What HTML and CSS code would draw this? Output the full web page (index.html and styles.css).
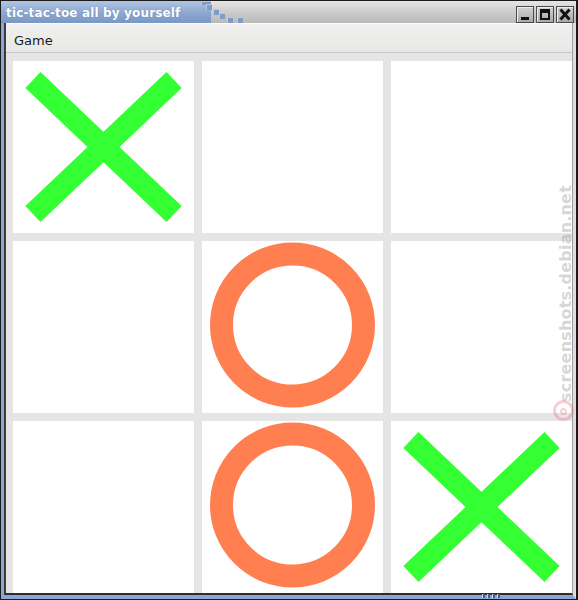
FILE: index.html
```html
<!DOCTYPE html>
<html>
<head>
<meta charset="utf-8">
<title>tic-tac-toe all by yourself</title>
<link rel="stylesheet" href="styles.css">
</head>
<body>
<div class="window">
  <div class="titlebar">
    <span class="title">tic-tac-toe all by yourself</span>
    <div class="steps">
      <span class="sq s1"></span><span class="sq s2"></span><span class="sq s3"></span><span class="sq s4"></span><span class="sq s5"></span><span class="sq s6"></span>
    </div>
    <div class="buttons">
      <span class="btn btn-min"><svg width="18" height="17" viewBox="0 0 18 17"><rect x="5" y="11" width="8" height="3" fill="#111"/></svg></span>
      <span class="btn btn-max"><svg width="18" height="17" viewBox="0 0 18 17"><rect x="5" y="4" width="8" height="9" fill="none" stroke="#111" stroke-width="2"/><rect x="5" y="4" width="8" height="3" fill="#111"/></svg></span>
      <span class="btn btn-close"><svg width="18" height="17" viewBox="0 0 18 17"><path d="M4.5 3.5 L13.5 13.5 M13.5 3.5 L4.5 13.5" stroke="#111" stroke-width="3"/></svg></span>
    </div>
  </div>
  <div class="frame">
    <div class="client">
      <div class="menubar"><span class="menu-item">Game</span></div>
      <div class="board">
        <div class="cell"><svg class="mark"><line class="x" x1="11%" y1="11%" x2="89%" y2="89%"/><line class="x" x1="89%" y1="11%" x2="11%" y2="89%"/></svg></div>
        <div class="cell"></div>
        <div class="cell"></div>
        <div class="cell"></div>
        <div class="cell"><svg class="mark"><circle class="o" cx="50%" cy="84" r="71"/></svg></div>
        <div class="cell"></div>
        <div class="cell"></div>
        <div class="cell"><svg class="mark"><circle class="o" cx="50%" cy="84" r="71"/></svg></div>
        <div class="cell"><svg class="mark"><line class="x" x1="11%" y1="11%" x2="89%" y2="89%"/><line class="x" x1="89%" y1="11%" x2="11%" y2="89%"/></svg></div>
      </div>
    </div>
  </div>
  <div class="grip"><span></span><span></span><span></span><span></span></div>
  <div class="watermark">screenshots.debian.net</div>
  <div class="wm-logo"><span class="wm-inner"></span></div>
</div>
</body>
</html>
```

FILE: styles.css
```css
* { box-sizing: border-box; }
html, body { margin: 0; padding: 0; background: #ffffff; }

.window {
  position: relative;
  width: 578px;
  height: 600px;
  display: flex;
  flex-direction: column;
  border: 1px solid #1c1c1c;
  border-right-width: 2px;
  font-family: "DejaVu Sans", sans-serif;
  overflow: hidden;
}

.titlebar {
  position: relative;
  height: 22px;
  flex: none;
  display: flex;
  align-items: center;
  background:
    linear-gradient(to bottom, #b2c5e2 0%, #8fa9d1 50%, #7a97c6 100%) 0 0 / 210px 100% no-repeat,
    linear-gradient(to bottom, #e6e6e6 0%, #cfcfcf 45%, #b9b9b9 100%);
}

.title {
  padding-left: 5px;
  padding-top: 1px;
  color: #ffffff;
  font-weight: bold;
  font-size: 12px;
  letter-spacing: 0.15px;
  text-shadow: 0 0 1px rgba(60, 80, 120, 0.5);
}

.steps { position: absolute; left: 200px; top: 0; width: 50px; height: 22px; }
.sq {
  position: absolute;
  width: 6px;
  height: 6px;
  background: #7f9bc8;
  border-top: 1px solid #b9cbe6;
  border-left: 1px solid #b9cbe6;
}
.s1 { left: 0; top: 0; width: 10px; height: 4px; }
.s2 { left: 5px; top: 3px; }
.s3 { left: 12px; top: 8px; }
.s4 { left: 18px; top: 12px; }
.s5 { left: 26px; top: 16px; }
.s6 { left: 36px; top: 16px; }

.buttons {
  margin-left: auto;
  margin-right: 2px;
  display: flex;
  gap: 2px;
  align-self: flex-end;
}
.btn {
  width: 18px;
  height: 17px;
  display: block;
  background: linear-gradient(to bottom, #d2d2d2, #a9a9a9);
  border: 1px solid #4a4a4a;
  box-shadow: inset 1px 1px 0 #efefef;
  position: relative;
}
.btn svg { position: absolute; left: -1px; top: -1px; }

.frame {
  flex: 1;
  display: flex;
  border-left: 3px solid #8aa6d2;
  border-right: 3px solid #dedede;
  border-bottom: 4px solid #8aa6d2;
}

.client {
  flex: 1;
  display: flex;
  flex-direction: column;
  border-left: 2px solid #3c3c3c;
  border-right: 1px solid #a0a0a0;
  border-bottom: 2px solid #2e2e2e;
  background: #e5e5e5;
}

.menubar {
  height: 30px;
  flex: none;
  display: flex;
  align-items: center;
  padding: 5px 0 0 8px;
  background: linear-gradient(to bottom, #f0f0ee, #e8e8e6);
  border-top: 1px solid #fbfbfb;
  border-bottom: 1px solid #c8c8c8;
}
.menu-item {
  font-size: 13px;
  color: #1a1a1a;
}

.board {
  flex: 1;
  display: grid;
  grid-template-columns: repeat(3, 181px);
  grid-template-rows: repeat(3, 1fr);
  gap: 8px;
  padding: 8px 0 0 7px;
  background: #e5e5e5;
}

.cell { background: #ffffff; position: relative; }

.mark { display: block; width: 100%; height: 100%; }
.x { stroke: #33ff33; stroke-width: 22; }
.o { fill: none; stroke: #ff7f50; stroke-width: 23; }

.grip {
  position: absolute;
  left: 481px;
  bottom: 1px;
  display: flex;
  gap: 2px;
}
.grip span { width: 3px; height: 4px; background: #4c5d7a; border-left: 1px solid #c8d4e8; }

.watermark {
  position: absolute;
  left: 555px;
  top: 184px;
  writing-mode: vertical-rl;
  transform: rotate(180deg);
  font-weight: bold;
  font-size: 16px;
  letter-spacing: 0.2px;
  color: rgba(130, 130, 130, 0.32);
}

.wm-logo {
  position: absolute;
  left: 552px;
  top: 399px;
  width: 21px;
  height: 21px;
  border-radius: 50%;
  border: 3px solid rgba(230, 90, 120, 0.3);
}
.wm-inner {
  position: absolute;
  left: 4px;
  top: 5px;
  width: 7px;
  height: 7px;
  border-radius: 50%;
  border: 2px solid rgba(230, 90, 120, 0.3);
}
```
